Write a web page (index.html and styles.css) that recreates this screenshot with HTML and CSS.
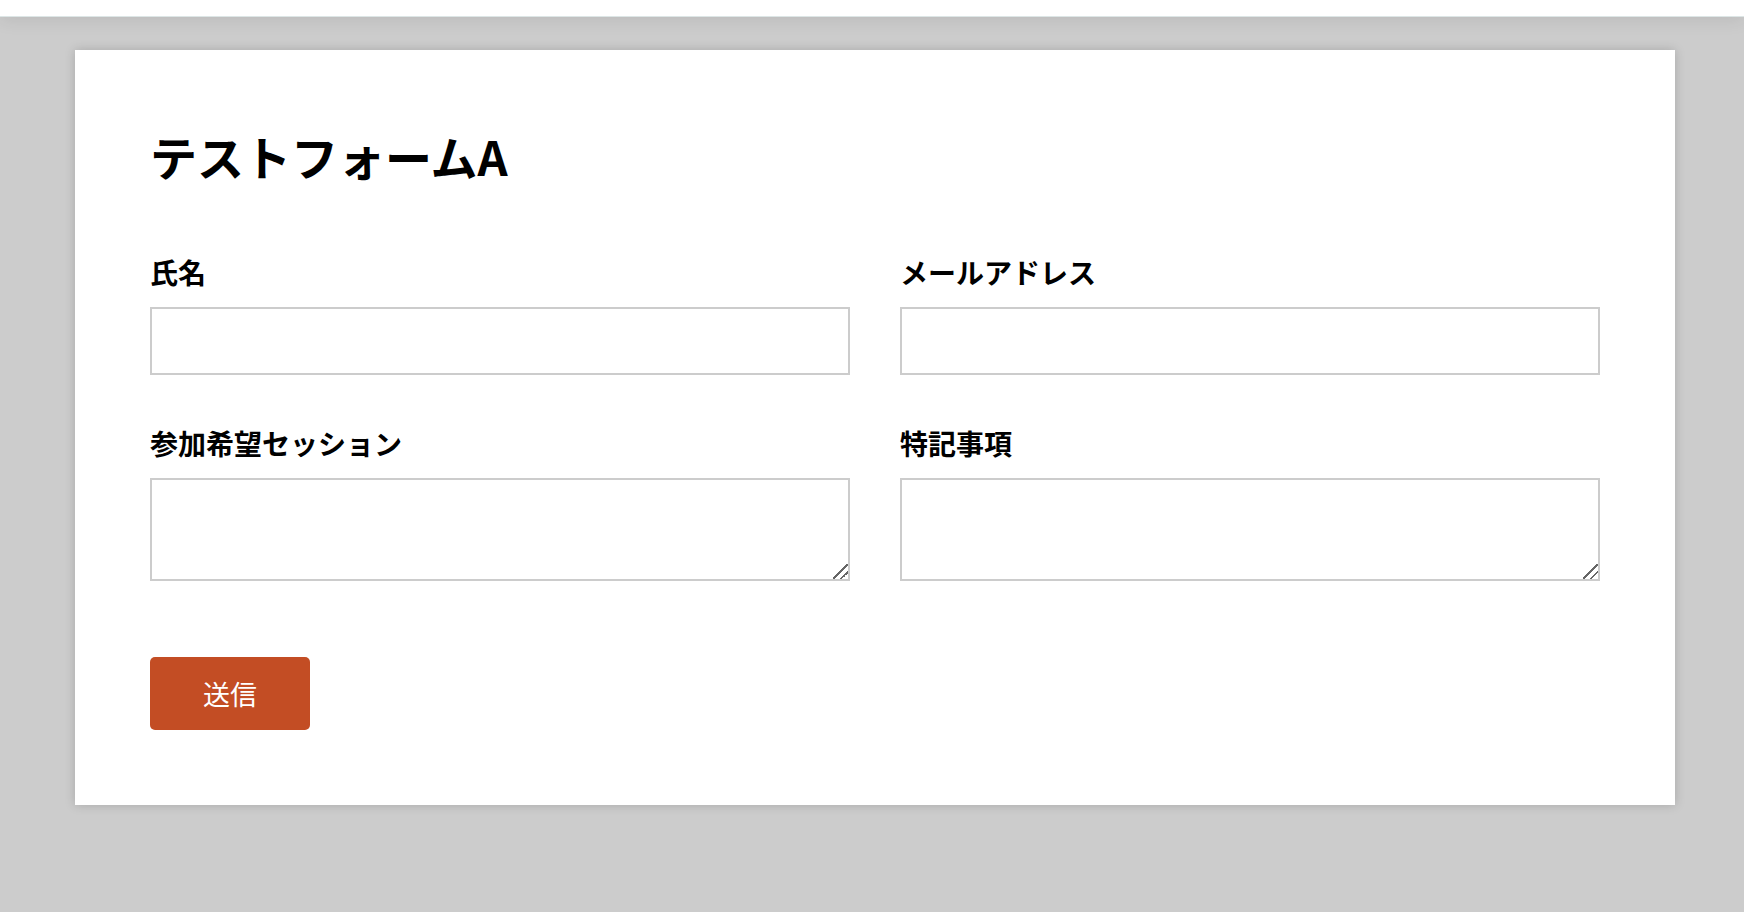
FILE: index.html
```html
<!DOCTYPE html>
<html lang="ja">
<head>
<meta charset="utf-8">
<title>テストフォームA</title>
<link rel="stylesheet" href="styles.css">
</head>
<body>
<header class="topbar"></header>
<main class="page">
  <section class="card">
    <h1 class="title">テストフォームA</h1>
    <form class="form">
      <div class="grid">
        <div class="field">
          <label class="label" for="name">氏名</label>
          <input class="input" id="name" type="text">
        </div>
        <div class="field">
          <label class="label" for="mail">メールアドレス</label>
          <input class="input" id="mail" type="email">
        </div>
        <div class="field">
          <label class="label" for="session">参加希望セッション</label>
          <textarea class="textarea" id="session"></textarea>
        </div>
        <div class="field">
          <label class="label" for="note">特記事項</label>
          <textarea class="textarea" id="note"></textarea>
        </div>
      </div>
      <button class="submit" type="button">送信</button>
    </form>
  </section>
</main>
</body>
</html>
```
FILE: styles.css
```css
* { box-sizing: border-box; }
html, body {
  margin: 0;
  padding: 0;
}
body {
  background: #cccccc;
  font-family: "Noto Sans CJK JP", "Noto Sans", sans-serif;
  color: #000;
  height: 912px;
  overflow: hidden;
}
.topbar {
  height: 17px;
  background: #ffffff;
  border-bottom: 1px solid #dde6e6;
  box-shadow: 0 3px 18px rgba(0, 0, 0, 0.09);
  position: relative;
  z-index: 1;
}
.page {
  padding: 33px 0 0 75px;
}
.card {
  width: 1600px;
  background: #ffffff;
  padding: 75px;
  box-shadow: 0 0 10px rgba(0, 0, 0, 0.18);
}
.title {
  margin: 0 0 68px;
  font-size: 47px;
  line-height: 62px;
  font-weight: 700;
}
.form {
  display: flex;
  flex-direction: column;
  align-items: flex-start;
}
.grid {
  width: 100%;
  display: grid;
  grid-template-columns: 700px 700px;
  column-gap: 50px;
  row-gap: 51px;
}
.field {
  display: flex;
  flex-direction: column;
}
.label {
  font-size: 28px;
  line-height: 34px;
  font-weight: 700;
  margin-bottom: 18px;
}
.input, .textarea {
  display: block;
  width: 100%;
  border: 2px solid #cccccc;
  border-radius: 0;
  background: #fff;
  margin: 0;
  font-family: inherit;
  font-size: 20px;
  outline: none;
}
.input { height: 68px; }
.textarea {
  height: 103px;
  resize: vertical;
}
.textarea::-webkit-resizer {
  background:
    linear-gradient(135deg,
      transparent 0, transparent 46%,
      #666 46%, #666 54%,
      transparent 54%, transparent 72%,
      #666 72%, #666 80%,
      transparent 80%);
}
.submit {
  margin-top: 76px;
  width: 160px;
  height: 73px;
  border: none;
  border-radius: 5px;
  background: #c34d24;
  color: #ffffff;
  font-family: inherit;
  font-size: 27px;
  font-weight: 400;
  line-height: 1;
  padding: 0;
}
```
